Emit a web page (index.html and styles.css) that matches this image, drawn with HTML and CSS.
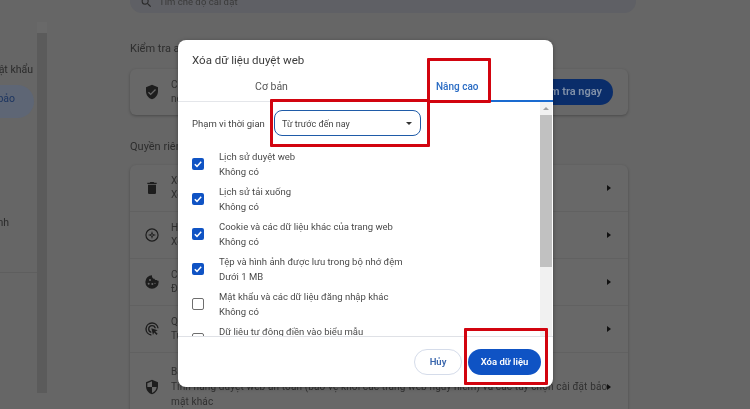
FILE: index.html
```html
<!DOCTYPE html>
<html lang="vi">
<head>
<meta charset="utf-8">
<title>Xóa dữ liệu duyệt web</title>
<link rel="stylesheet" href="styles.css">
</head>
<body>
<div class="page">
  <aside class="sidebar">
    <div class="nav-item nav-first">Tự động điền và mật khẩu</div>
    <div class="nav-item nav-active"><span>Quyền riêng tư và bảo</span></div>
    <div class="nav-item nav-last">Trình duyệt mặc định</div>
    <div class="nav-rule"></div>
  </aside>
  <div class="page-scroll"><div class="page-thumb"></div></div>
  <main class="main">
    <div class="search">
      <svg class="search-icon" viewBox="0 0 24 24"><path d="M15.5 14h-.79l-.28-.27A6.47 6.47 0 0 0 16 9.5 6.5 6.5 0 1 0 9.5 16c1.61 0 3.09-.59 4.23-1.57l.27.28v.79l5 4.99L20.49 19l-4.99-5zm-6 0C7.01 14 5 11.99 5 9.5S7.01 5 9.5 5 14 7.01 14 9.5 11.99 14 9.5 14z"/></svg>
      <span>Tìm chế độ cài đặt</span>
    </div>
    <h2 class="section-title first-title">Kiểm tra an toàn</h2>
    <section class="card check-card">
      <svg class="row-icon" viewBox="0 0 24 24"><path d="M12 1L3 5v6c0 5.55 3.84 10.74 9 12 5.16-1.26 9-6.45 9-12V5l-9-4zm-2 16l-4-4 1.41-1.41L10 14.17l6.59-6.59L18 9l-8 8z"/></svg>
      <div class="row-text">Chrome có thể giúp bạn an toàn<br>nếu có vi phạm dữ liệu</div>
      <div class="check-btn">Kiểm tra ngay</div>
    </section>
    <h2 class="section-title">Quyền riêng tư và bảo mật</h2>
    <section class="card">
      <div class="row">
        <svg class="row-icon" viewBox="0 0 24 24"><path d="M6 19c0 1.1.9 2 2 2h8c1.1 0 2-.9 2-2V7H6v12zM19 4h-3.5l-1-1h-5l-1 1H5v2h14V4z"/></svg>
        <div class="row-text">Xóa dữ liệu duyệt web<br>Xóa lịch sử, cookie, bộ nhớ đệm</div>
        <i class="chev"></i>
      </div>
      <div class="row">
        <svg class="row-icon" viewBox="0 0 24 24"><path fill-rule="evenodd" d="M12 2a10 10 0 1 0 0 20 10 10 0 0 0 0-20zm0 1.8a8.200 8.200 0 1 1 0 16.400 8.200 8.200 0 0 1 0-16.400zM12 6l1.400 4.600L18 12l-4.600 1.400L12 18l-1.400-4.600L6 12l4.600-1.400zm0 4.700a1.300 1.300 0 1 0 0 2.600 1.300 1.300 0 0 0 0-2.600z"/></svg>
        <div class="row-text">Hướng dẫn về quyền riêng tư<br>Xem lại các tùy chọn kiểm soát</div>
        <i class="chev"></i>
      </div>
      <div class="row">
        <svg class="row-icon" viewBox="0 0 24 24"><path fill-rule="evenodd" d="M12 2a10 10 0 1 0 10 10c0-.7-.1-1.300-.2-1.900-1.100.4-2.300-.1-2.800-1.100-1.400.5-3-.3-3.300-1.800C14 7.200 12.300 5.800 12 4c0-.7 0-1.400 0-2zM9 7.500a1.500 1.500 0 1 1 0 3 1.500 1.500 0 0 1 0-3zM7 13a1.500 1.500 0 1 1 0 3 1.500 1.500 0 0 1 0-3zm5.500 .5a1.500 1.500 0 1 1 0 3 1.500 1.500 0 0 1 0-3zm4-.5a1 1 0 1 1 0 2 1 1 0 0 1 0-2z"/></svg>
        <div class="row-text">Cookie của bên thứ ba<br>Đã chặn cookie của bên thứ ba</div>
        <i class="chev"></i>
      </div>
      <div class="row">
        <svg class="row-icon" viewBox="0 0 24 24"><path d="M12 2a10 10 0 0 0-1 19.950v-2A8 8 0 1 1 20 11h2A10 10 0 0 0 12 2zm0 4a6 6 0 0 0-1 11.900v-2.050A4 4 0 1 1 15.900 11h2A6 6 0 0 0 12 6zm-1 5l2.500 10 1.700-3.600 3.600 3.600 1.700-1.700-3.600-3.600 3.600-1.700z"/></svg>
        <div class="row-text">Quảng cáo trong Chrome<br>Tùy chỉnh các tùy chọn quảng cáo</div>
        <i class="chev"></i>
      </div>
      <div class="row row-tall">
        <svg class="row-icon" viewBox="0 0 24 24"><path d="M12 1L3 5v6c0 5.55 3.84 10.74 9 12 5.160-1.260 9-6.450 9-12V5l-9-4zm0 10.990h7c-.53 4.120-3.280 7.790-7 8.940V12H5V6.300l7-3.110v8.800z"/></svg>
        <div class="row-text row-text-wide">Bảo mật<br>Tính năng duyệt web an toàn (bảo vệ khỏi các trang web nguy hiểm) và các tùy chọn cài đặt bảo<br>mật khác</div>
        <i class="chev"></i>
      </div>
    </section>
  </main>
</div>

<div class="dialog">
  <div class="dialog-title">Xóa dữ liệu duyệt web</div>
  <div class="tabs">
    <div class="tab">Cơ bản</div>
    <div class="tab tab-on"><span>Nâng cao</span></div>
  </div>
  <div class="dialog-body">
    <div class="content">
      <div class="range">
        <span class="range-label">Phạm vi thời gian</span>
        <div class="select"><span>Từ trước đến nay</span><i class="caret"></i></div>
      </div>
      <div class="opt"><i class="box on"><svg viewBox="0 0 12 12"><path d="M2.800 6.200l2.200 2.200 4.200-4.600"/></svg></i><div><div>Lịch sử duyệt web</div><div>Không có</div></div></div>
      <div class="opt"><i class="box on"><svg viewBox="0 0 12 12"><path d="M2.800 6.200l2.200 2.200 4.200-4.600"/></svg></i><div><div>Lịch sử tải xuống</div><div>Không có</div></div></div>
      <div class="opt"><i class="box on"><svg viewBox="0 0 12 12"><path d="M2.800 6.200l2.200 2.200 4.200-4.600"/></svg></i><div><div>Cookie và các dữ liệu khác của trang web</div><div>Không có</div></div></div>
      <div class="opt"><i class="box on"><svg viewBox="0 0 12 12"><path d="M2.800 6.200l2.200 2.200 4.200-4.600"/></svg></i><div><div>Tệp và hình ảnh được lưu trong bộ nhớ đệm</div><div>Dưới 1 MB</div></div></div>
      <div class="opt"><i class="box"></i><div><div>Mật khẩu và các dữ liệu đăng nhập khác</div><div>Không có</div></div></div>
      <div class="opt"><i class="box"></i><div><div>Dữ liệu tự động điền vào biểu mẫu</div><div>Không có</div></div></div>
    </div>
    <div class="scrollbar"><i class="scroll-up"></i><div class="scroll-thumb"></div></div>
  </div>
  <div class="footer">
    <div class="btn btn-cancel">Hủy</div>
    <div class="btn btn-primary">Xóa dữ liệu</div>
  </div>
</div>

<div class="mark mark-tab"></div>
<div class="mark mark-select"></div>
<div class="mark mark-btn"></div>
</body>
</html>
```

FILE: styles.css
```css
* { box-sizing: border-box; }
html, body { margin: 0; height: 409px; overflow: hidden; }
body {
  position: relative;
  background: #666;
  font-family: Roboto, "Noto Sans", sans-serif;
  font-size: 10px;
  color: #2e2e2e;
}
.page {
  display: grid;
  grid-template-columns: 37px 10px 498px;
  height: 409px;
  overflow: hidden;
  filter: blur(.4px);
}
.sidebar { overflow: hidden; padding-top: 62px; width: 37px; }
.nav-item {
  display: flex;
  justify-content: flex-end;
  white-space: nowrap;
  font-size: 10.500px;
  line-height: 16px;
  color: #2b2b2b;
  padding-right: 4px;
}
.nav-active {
  margin: 7px 3px 0 0;
  height: 33px;
  align-items: center;
  padding: 0 19px 6px 0;
  background: #5e6675;
  border-radius: 0 17px 17px 0;
  color: #1d3560;
}
.nav-last { margin-top: 97px; padding-right: 28px; }
.nav-rule { margin-top: 41px; height: 1px; background: #5e5e5e; }
.page-scroll { background: #696969; margin-top: 22px; padding-top: 11px; height: 371px; }
.page-thumb { height: 360px; background: #5b5b5b; }
.main { margin-left: 83px; width: 498px; }
.search {
  display: flex;
  align-items: flex-end;
  gap: 6px;
  width: 506px;
  height: 13px;
  margin-bottom: 29px;
  padding: 0 0 6px 10px;
  background: #5f6065;
  border-radius: 0 0 12px 12px;
  font-size: 9.500px;
  line-height: 10px;
  color: #3a3a3a;
  overflow: hidden;
}
.search-icon { width: 13px; height: 13px; fill: #2a2a2a; flex: none; margin-bottom: -2px; }
.section-title {
  margin: 0;
  font-size: 11px;
  font-weight: 400;
  line-height: 14px;
  color: #2d2d2d;
}
.first-title { margin-bottom: 13px; }
.card {
  background: #686868;
  border-radius: 6px;
  box-shadow: 0 1px 3px rgba(0, 0, 0, .28);
}
.check-card {
  display: flex;
  align-items: center;
  height: 46px;
  padding: 0 15px 0 14px;
  margin-bottom: 25px;
}
.check-card + .section-title { margin-bottom: 11px; }
.row {
  display: flex;
  align-items: center;
  height: 47px;
  padding: 0 17px 0 14px;
  border-bottom: 1px solid #616161;
}
.row-tall { height: 62px; border-bottom: 0; padding-top: 5px; }
.row-icon { width: 16px; height: 16px; fill: #1d1d1d; flex: none; margin-right: 11px; }
.row-text { flex: 1; font-size: 10px; line-height: 14.500px; color: #303030; white-space: nowrap; overflow: hidden; }
.row-text-wide { letter-spacing: .13px; line-height: 15px; }
.chev {
  flex: none;
  width: 0;
  height: 0;
  border-left: 4px solid #111;
  border-top: 3.500px solid transparent;
  border-bottom: 3.500px solid transparent;
}
.check-btn {
  flex: none;
  width: 124px;
  height: 26px;
  border-radius: 13px;
  background: #0a2d6a;
  color: #8090a8;
  font-size: 11px;
  font-weight: 600;
  line-height: 26px;
  text-align: right;
  padding-right: 11px;
}

.dialog {
  position: absolute;
  left: 178px;
  top: 40px;
  width: 375px;
  height: 347px;
  display: flex;
  flex-direction: column;
  background: #fff;
  border-radius: 8px;
  overflow: hidden;
  color: #444;
  box-shadow: 0 1px 4px rgba(0, 0, 0, .35);
  filter: blur(.3px);
}
.dialog-title { padding: 12px 14px 0; height: 37px; font-size: 11.500px; line-height: 16px; color: #3c3c3c; }
.tabs { display: flex; height: 25px; border-bottom: 1px solid #e4e6ea; font-size: 10px; line-height: 20px; flex: none; }
.tab { width: 187px; text-align: center; color: #555; font-size: 10.500px; }
.tab-on {
  width: 188px;
  text-align: left;
  padding-left: 71px;
  color: #2a6cc4;
  font-size: 10px;
  font-weight: 500;
  height: 25px;
  border-bottom: 2px solid #1a6bd0;
}
.dialog-body { display: flex; flex: 1; min-height: 0; border-bottom: 1px solid #dfe1e6; }
.content { flex: 1; overflow: hidden; padding: 8px 0 0 14px; }
.range { display: flex; align-items: center; height: 26px; margin-bottom: 10px; }
.range-label { width: 82px; font-size: 9.500px; color: #444; }
.select {
  width: 147px;
  height: 26px;
  display: flex;
  align-items: center;
  justify-content: space-between;
  padding: 1px 8px 0 7px;
  border: 1.500px solid #1f5ba8;
  border-radius: 8px;
  font-size: 9px;
  color: #444;
}
.caret { border: 3px solid transparent; border-top: 3.500px solid #333; border-bottom: 0; }
.opt { display: flex; align-items: center; height: 35px; font-size: 9.500px; line-height: 15px; color: #4a4a4a; }
.box {
  width: 12px;
  height: 12px;
  margin-right: 15px;
  border: 1.500px solid #6e6e6e;
  border-radius: 2px;
  flex: none;
}
.box.on { background: #0f53c4; border: 0; }
.box svg { display: block; width: 12px; height: 12px; fill: none; stroke: #fff; stroke-width: 1.500; }
.scrollbar { width: 12px; background: #f1f1f1; margin-right: 1px; flex: none; padding-top: 13px; position: relative; }
.scroll-up {
  position: absolute;
  left: 3px;
  top: 5px;
  border: 3px solid transparent;
  border-bottom: 3px solid #a0a0a0;
  border-top: 0;
}
.scroll-thumb { height: 152px; background: #c1c1c1; }
.footer { display: flex; justify-content: flex-end; gap: 6px; height: 50px; padding: 12px 12px 0 0; flex: none; }
.btn { height: 26px; border-radius: 13px; font-size: 9.500px; font-weight: 600; line-height: 26px; text-align: center; }
.btn-cancel { width: 48px; border: 1px solid #d5dcea; color: #3a66ad; line-height: 24px; }
.btn-primary { width: 73px; background: #0f53c4; color: #fff; }

.mark { position: absolute; border: 3px solid #d2040f; border-radius: 1px; }
.mark-tab { left: 427px; top: 58px; width: 64px; height: 45px; }
.mark-select { left: 270px; top: 99px; width: 160px; height: 48px; }
.mark-btn { left: 464px; top: 328px; width: 84px; height: 57px; }
```
